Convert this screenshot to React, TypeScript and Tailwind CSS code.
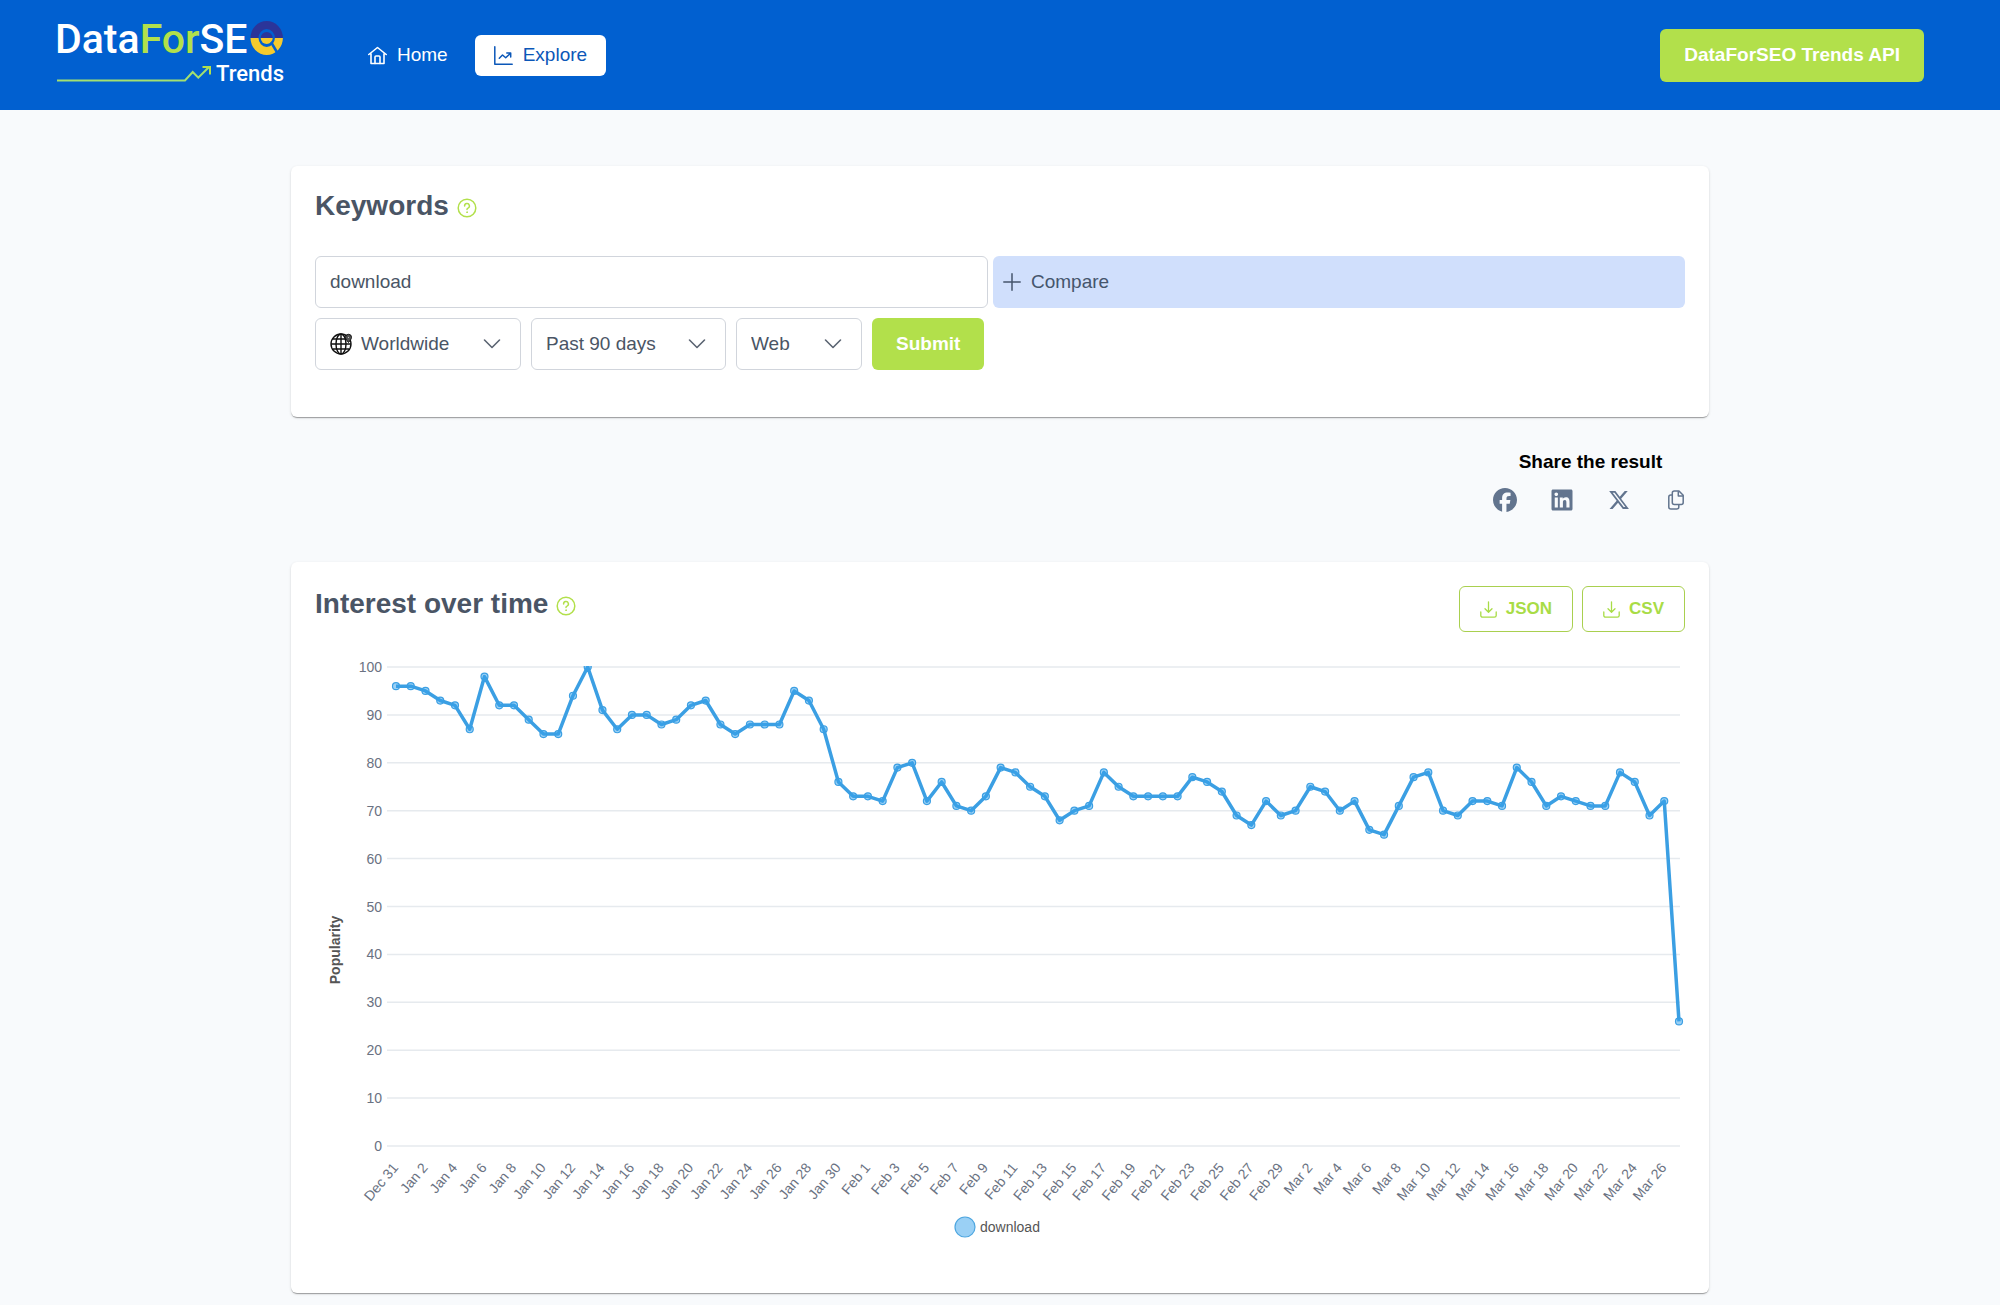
import React, { useState } from 'react';
import { FaFacebook, FaLinkedin, FaXTwitter } from 'react-icons/fa6';

const POPULARITY = [
  96, 96, 95, 93, 92, 87, 98, 92, 92, 89, 86, 86, 94, 100, 91, 87, 90, 90, 88, 89, 92, 93,
  88, 86, 88, 88, 88, 95, 93, 87, 76, 73, 73, 72, 79, 80, 72, 76, 71, 70, 73, 79, 78, 75,
  73, 68, 70, 71, 78, 75, 73, 73, 73, 73, 77, 76, 74, 69, 67, 72, 69, 70, 75, 74, 70, 72,
  66, 65, 71, 77, 78, 70, 69, 72, 72, 71, 79, 76, 71, 73, 72, 71, 71, 78, 76, 69, 72, 26,
];

const Y_TICKS = [0, 10, 20, 30, 40, 50, 60, 70, 80, 90, 100];

const CHART = { left: 81, right: 1364, top: 17, bottom: 496 };

const xAt = (i: number) => CHART.left + (i * (CHART.right - CHART.left)) / (POPULARITY.length - 1);
const yAt = (v: number) => CHART.bottom - (v * (CHART.bottom - CHART.top)) / 100;

const dayLabel = (i: number) =>
  new Date(Date.UTC(2023, 11, 31 + i)).toLocaleDateString('en-US', { month: 'short', day: 'numeric', timeZone: 'UTC' });

const Logo: React.FC = () => (
  <svg viewBox="-4 -7 234 84" className="h-[84px] w-[234px]" role="img" aria-label="DataForSEO Trends">
    <text x="-2" y="33" fontSize="41" fill="#fff" className="font-['Roboto',sans-serif] font-medium">
      Data<tspan fill="#b2e04b">For</tspan>SE
    </text>
    <path d="M193.500 18a16.200 17 0 0 1 32.400 0h-8a8.200 9 0 0 0-16.400 0z" fill="#2b3599" />
    <path d="M193.500 18a16.200 17 0 0 0 32.400 0h-8a8.200 9 0 0 1-16.400 0z" fill="#f5ca2c" />
    <path d="M203.700 18a6 6 0 0 1 12 0z" fill="#2b3599" />
    <path d="M203.700 18a6 6 0 0 0 12 0z" fill="#f5ca2c" />
    <path d="M214 22l7 12" stroke="#0160d0" strokeWidth="2.500" />
    <path d="M0 60.500h128l7.700-8.500 5.600 5.700 11-11" fill="none" stroke="#a3e070" strokeWidth="2" />
    <path d="M145.500 47h7.500v7.500" fill="none" stroke="#b2e04b" strokeWidth="2" />
    <text x="159" y="61" fontSize="22" fill="#fff" className="font-['Roboto',sans-serif] font-medium">Trends</text>
  </svg>
);

const HomeIcon: React.FC = () => (
  <svg viewBox="0 0 19 19" className="size-[19px]" fill="none" stroke="currentColor" strokeWidth="1.600" strokeLinecap="round" strokeLinejoin="round">
    <path d="M.8 8.500 9.500 1.500l8.700 7M3 7.500v10h13v-10" />
    <path d="M7 17.500v-6.500a1 1 0 0 1 1-1h3a1 1 0 0 1 1 1v6.500" />
  </svg>
);

const ChartIcon: React.FC = () => (
  <svg viewBox="0 0 19 19" className="size-[19px]" fill="none" stroke="currentColor" strokeWidth="1.500" strokeLinecap="round" strokeLinejoin="round">
    <path d="M.8.800v17.400h17.400" />
    <path d="M5.300 12.200 8.500 9l3.200 2.800 4.800-4.600M12.800 7h3.900v3.900" />
  </svg>
);

const HelpIcon: React.FC = () => (
  <svg viewBox="0 0 20 20" className="mt-[3px] size-5 text-[#b2e04b]" fill="none" stroke="currentColor" strokeWidth="1.500" strokeLinecap="round">
    <circle cx="10" cy="10" r="8.800" />
    <path d="M7.600 8a2.400 2.400 0 1 1 3.400 2.100c-.7.300-1 .7-1 1.400" />
    <circle cx="10" cy="14.200" r=".4" fill="currentColor" strokeWidth="1" />
  </svg>
);

const GlobeIcon: React.FC = () => (
  <svg viewBox="0 0 22 22" className="size-[22px]" fill="none" stroke="#111" strokeWidth="1.400">
    <circle cx="11" cy="11" r="10" />
    <ellipse cx="11" cy="11" rx="5" ry="10" />
    <path d="M11 1v20M1 11h20M2.800 6h16.400M2.800 16h16.400" />
    <path d="M18.500 9.500c-2-2.600-3-3.700-3-5.200a3 3 0 0 1 6 0c0 1.500-1 2.600-3 5.200z" fill="#555" strokeWidth="1" />
    <circle cx="18.500" cy="4.300" r=".9" fill="#fff" strokeWidth=".5" />
  </svg>
);

const ChevronIcon: React.FC = () => (
  <svg viewBox="0 0 18 18" className="size-[18px] text-[#5b6472]" fill="none" stroke="currentColor" strokeWidth="1.600" strokeLinecap="round" strokeLinejoin="round">
    <path d="M1.500 5 9 12.500 16.500 5" />
  </svg>
);

const PlusIcon: React.FC = () => (
  <svg viewBox="0 0 18 18" className="size-[18px]" fill="none" stroke="currentColor" strokeWidth="1.500" strokeLinecap="round">
    <path d="M9 .8v16.400M.8 9h16.400" />
  </svg>
);

const DownloadIcon: React.FC = () => (
  <svg viewBox="0 0 17 17" className="size-[17px]" fill="none" stroke="currentColor" strokeWidth="1.300" strokeLinecap="round" strokeLinejoin="round">
    <path d="M8.500.8v10.400M5 7.800l3.500 3.500L12 7.800" />
    <path d="M.8 11v3.400a1.800 1.800 0 0 0 1.800 1.800h11.800a1.800 1.800 0 0 0 1.800-1.800V11" />
  </svg>
);

const CopyIcon: React.FC = () => (
  <svg viewBox="0 0 20 20" className="size-5" fill="none" stroke="currentColor" strokeWidth="1.500" strokeLinejoin="round">
    <path d="M8.300 1h4.700l4.200 4.200v7.300a2 2 0 0 1-2 2H8.300a2 2 0 0 1-2-2V3a2 2 0 0 1 2-2z" />
    <path d="M12.300 1.200v4.700h4.700" />
    <path d="M6.300 5H4.800a2 2 0 0 0-2 2v10a2 2 0 0 0 2 2h6a2 2 0 0 0 2-2v-2.500" />
  </svg>
);

const Card: React.FC<{ className?: string; children: React.ReactNode }> = ({ className = '', children }) => (
  <section
    className={`rounded-md bg-white px-6 shadow-[0_2px_1px_-1px_rgba(0,0,0,0.2),0_1px_1px_0_rgba(0,0,0,0.14),0_1px_3px_0_rgba(0,0,0,0.12)] ${className}`}
  >
    {children}
  </section>
);

interface SelectProps {
  label: string;
  options: string[];
  className: string;
  icon?: React.ReactNode;
}

const Select: React.FC<SelectProps> = ({ label, options, className, icon }) => (
  <div className="relative">
    {icon && <span className="pointer-events-none absolute inset-y-0 left-[15px] flex items-center">{icon}</span>}
    <select
      aria-label={label}
      className={`h-[52px] appearance-none rounded-md border border-gray-300 bg-white pr-[50px] text-[19px] text-gray-600 ${className}`}
    >
      {options.map((o) => (
        <option key={o}>{o}</option>
      ))}
    </select>
    <span className="pointer-events-none absolute inset-y-0 right-5 flex items-center">
      <ChevronIcon />
    </span>
  </div>
);

const DownloadButton: React.FC<{ label: string }> = ({ label }) => (
  <button className="flex h-[46px] items-center gap-[9px] rounded-md border border-[#a9d04f] px-5 text-[17px] font-bold text-[#a8dc46]">
    <DownloadIcon />
    {label}
  </button>
);

const InterestChart: React.FC = () => (
  <svg viewBox="0 0 1370 600" className="block w-full" role="img" aria-label="Popularity of download over time">
    <defs>
      <clipPath id="plot">
        <rect x="70" y="16" width="1300" height="484" />
      </clipPath>
    </defs>

    {Y_TICKS.map((t) => (
      <g key={t}>
        <line x1="72" x2="1365" y1={yAt(t)} y2={yAt(t)} stroke="#e6eaee" strokeWidth="1.500" />
        <text x="67" y={yAt(t) + 5} textAnchor="end" className="fill-gray-500 text-[14px]">{t}</text>
      </g>
    ))}

    {POPULARITY.map((_, i) =>
      i % 2 === 0 ? (
        <text
          key={i}
          transform={`translate(${xAt(i) + 3} 518) rotate(-50)`}
          textAnchor="end"
          className="fill-gray-500 text-[14px]"
        >
          {dayLabel(i)}
        </text>
      ) : null,
    )}

    <text transform="translate(25 300) rotate(-90)" textAnchor="middle" className="fill-[#555] text-[14px] font-bold">
      Popularity
    </text>

    <g clipPath="url(#plot)">
      <polyline
        points={POPULARITY.map((v, i) => `${xAt(i)},${yAt(v)}`).join(' ')}
        fill="none"
        stroke="#3b9fe3"
        strokeWidth="3.500"
        strokeLinejoin="round"
      />
      {POPULARITY.map((v, i) => (
        <circle key={i} cx={xAt(i)} cy={yAt(v)} r="3.500" fill="#36a2eb" fillOpacity="0.5" stroke="#3b9fe3" strokeWidth="1.200" />
      ))}
    </g>

    <circle cx="650" cy="577" r="10" fill="#9ad0f5" stroke="#4da6e0" strokeWidth="1.200" />
    <text x="665" y="582" className="fill-[#555] text-[14px]">download</text>
  </svg>
);

export default function App() {
  const [keyword, setKeyword] = useState('download');

  return (
    <div className="min-h-screen bg-[#f8fafc] font-['Liberation_Sans',Arial,sans-serif] text-[19px] leading-6">
      <header className="flex h-[110px] items-center bg-[#0160d0] pr-[76px] pl-[53px] text-white">
        <a href="#home">
          <Logo />
        </a>
        <nav className="ml-[62px] flex gap-[8px]">
          <a href="#home" className="flex h-[41px] items-center gap-[10px] rounded-md px-[19px]">
            <HomeIcon />
            Home
          </a>
          <a href="#explore" className="flex h-[41px] items-center gap-[10px] rounded-md bg-white px-[19px] text-[#0b57b8]">
            <ChartIcon />
            Explore
          </a>
        </nav>
        <a href="#api" className="ml-auto flex h-[53px] items-center rounded-md bg-[#b2e04b] px-6 font-bold">
          DataForSEO Trends API
        </a>
      </header>

      <main className="mx-auto flex max-w-[1418px] flex-col pt-14 pb-3">
        <Card className="pt-6 pb-[47px]">
          <h2 className="flex items-center gap-2 text-[28px] leading-8 font-bold text-gray-600">
            Keywords
            <HelpIcon />
          </h2>
          <form onSubmit={(e) => e.preventDefault()} className="mt-[34px] flex flex-col gap-[10px]">
            <div className="flex gap-[5px]">
              <input
                aria-label="Keyword"
                value={keyword}
                onChange={(e) => setKeyword(e.target.value)}
                className="h-[52px] w-[673px] rounded-md border border-gray-300 bg-white px-[14px] text-gray-600"
              />
              <button type="button" className="flex h-[52px] flex-1 items-center gap-[10px] rounded-md bg-[#d0dffc] px-[10px] text-slate-600">
                <PlusIcon />
                Compare
              </button>
            </div>
            <div className="flex gap-[10px]">
              <Select label="Location" options={['Worldwide']} className="w-[206px] pl-[45px]" icon={<GlobeIcon />} />
              <Select label="Time range" options={['Past 90 days']} className="w-[195px] pl-[14px]" />
              <Select label="Search type" options={['Web']} className="w-[126px] pl-[14px]" />
              <button type="submit" className="h-[52px] rounded-md bg-[#b2e04b] px-6 font-bold text-white">
                Submit
              </button>
            </div>
          </form>
        </Card>

        <div className="mt-[33px] mr-[21px] flex flex-col items-center gap-[14px] self-end">
          <p className="font-bold text-black">Share the result</p>
          <div className="flex gap-[33px] text-slate-500">
            <a href="#facebook" aria-label="Facebook" className="grid size-6 place-items-center"><FaFacebook size={24} /></a>
            <a href="#linkedin" aria-label="LinkedIn" className="grid size-6 place-items-center"><FaLinkedin size={24} /></a>
            <a href="#x" aria-label="X" className="grid size-6 place-items-center"><FaXTwitter size={22} /></a>
            <button aria-label="Copy link" className="grid size-6 place-items-center"><CopyIcon /></button>
          </div>
        </div>

        <Card className="mt-[50px] pt-6 pb-[43px]">
          <div className="flex items-start justify-between">
            <h2 className="flex items-center gap-2 text-[28px] leading-9 font-bold text-gray-600">
              Interest over time
              <HelpIcon />
            </h2>
            <div className="flex gap-[9px]">
              <DownloadButton label="JSON" />
              <DownloadButton label="CSV" />
            </div>
          </div>
          <div className="mt-[18px]">
            <InterestChart />
          </div>
        </Card>
      </main>
    </div>
  );
}
